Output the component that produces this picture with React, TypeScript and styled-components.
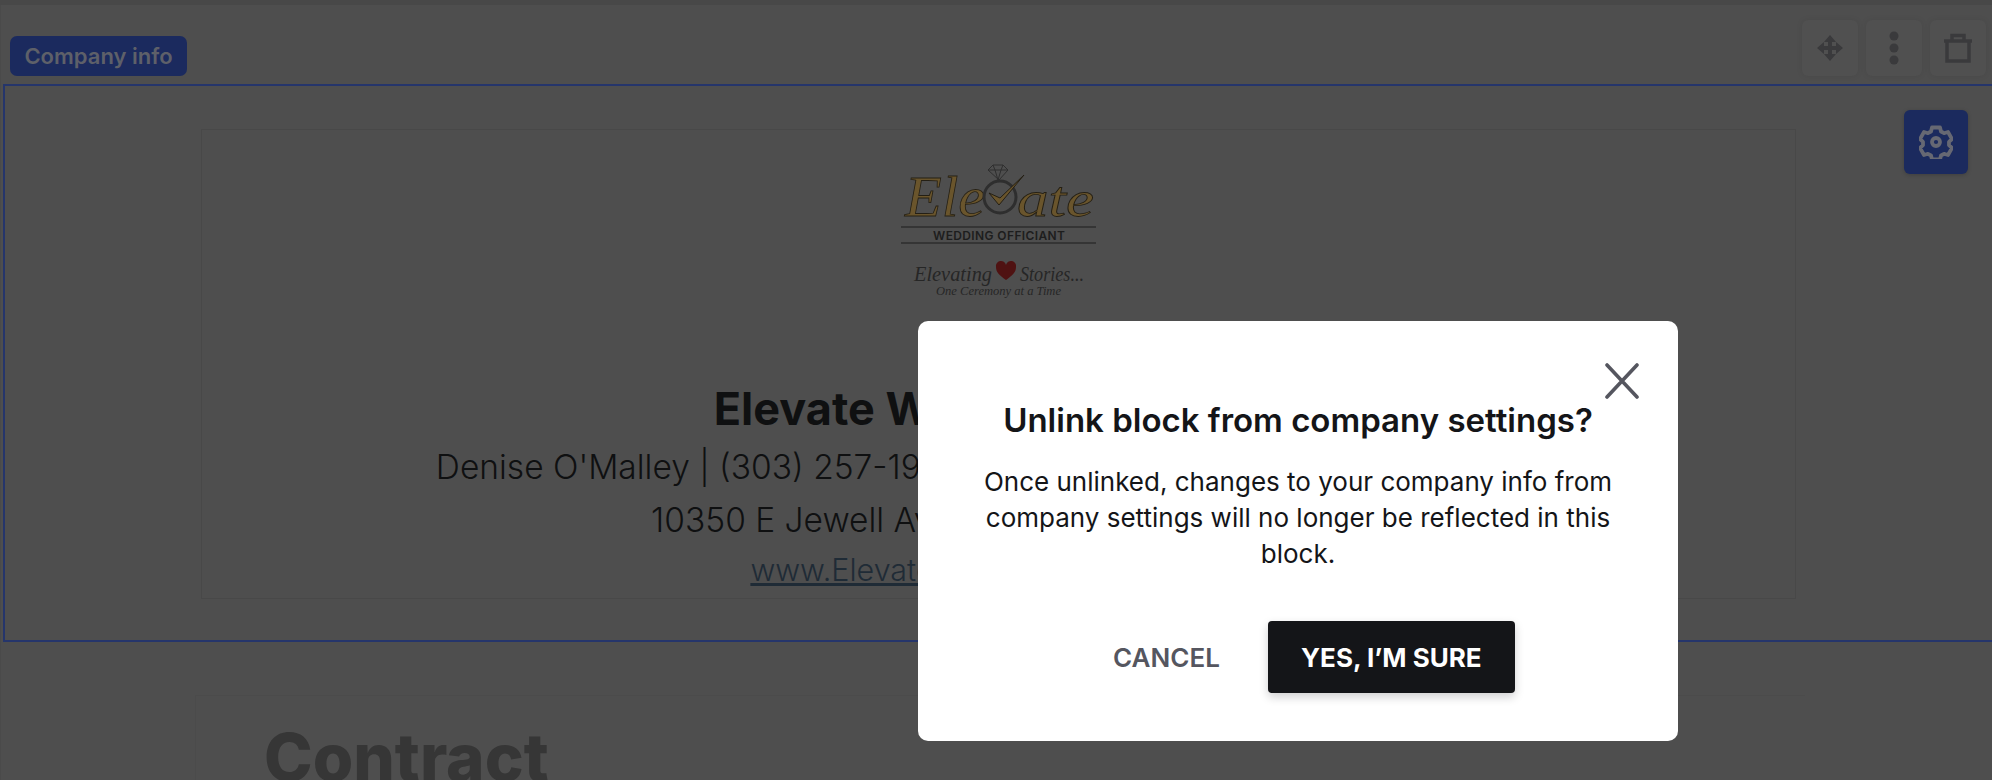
import styled, { createGlobalStyle } from "styled-components";

const GlobalStyle = createGlobalStyle`
  html, body {
    margin: 0;
    padding: 0;
    background: #4e4e4e;
    font-family: "Inter", "Liberation Sans", sans-serif;
  }
  * { box-sizing: border-box; }
`;
const Page = styled.div`
  position: relative;
  width: 1992px;
  height: 780px;
  overflow: hidden;
  background: #4e4e4e;
`;
const TopStrip = styled.div`
  height: 5px;
  background: #484848;
`;
const Sheet = styled.div`
  padding-left: 2px;
  border-left: 1px solid #4a4a4a;
`;
const BlockBar = styled.div`
  height: 79px;
  display: flex;
  justify-content: space-between;
  padding: 15px 6px 8px 7px;
`;
const BlockLabel = styled.span`
  align-self: flex-end;
  height: 40px;
  width: 177px;
  display: flex;
  align-items: center;
  justify-content: center;
  border-radius: 7px;
  background: #1b2a5e;
  color: #5e6069;
  font-size: 22px;
  font-weight: 600;
  white-space: nowrap;
`;
const Tools = styled.div`
  display: flex;
  gap: 8px;
`;
const ToolButton = styled.div`
  width: 56px;
  height: 56px;
  display: flex;
  align-items: center;
  justify-content: center;
  border-radius: 6px;
  background: #505050;
  box-shadow: 0 0 6px rgba(0, 0, 0, 0.08);
  color: #3a3a3c;
`;
const Block = styled.section`
  position: relative;
  height: 558px;
  padding: 43px 0 0 196px;
  border: 1px solid #25356b;
  border-width: 2px 0 2px 2px;
`;
const GearButton = styled.div`
  position: absolute;
  top: 24px;
  right: 24px;
  width: 64px;
  height: 64px;
  display: flex;
  align-items: center;
  justify-content: center;
  border-radius: 6px;
  background: #1b2a5e;
  color: #666873;
  box-shadow: 0 1px 4px rgba(0, 0, 0, 0.2);
`;
const CompanyCard = styled.div`
  width: 1595px;
  height: 470px;
  border: 1px solid #484848;
  display: flex;
  flex-direction: column;
  align-items: center;
  color: #0f1011;
`;
const LogoWrap = styled.div`
  height: 247px;
  padding: 21px 0 0 2px;
`;
const CompanyName = styled.h2`
  margin: 0;
  font-size: 45px;
  line-height: 64px;
  font-weight: 700;
  white-space: nowrap;
`;
const CompanyLine = styled.p`
  margin: 0;
  font-size: 33.5px;
  line-height: 53px;
  font-weight: 300;
  white-space: nowrap;
`;
const CompanyLink = styled.a`
  font-size: 30.5px;
  line-height: 46px;
  font-weight: 300;
  color: #1f2b36;
  text-decoration: underline;
  white-space: nowrap;
`;
const ContractCard = styled.div`
  margin: 53px 0 0 192px;
  width: 1610px;
  padding: 22px 0 0 68px;
  border-left: 1px solid #4b4b4b;
  border-top: 1px solid #4b4b4b;
`;
const ContractTitle = styled.h1`
  margin: 0;
  font-size: 65.5px;
  line-height: 80px;
  font-weight: 800;
  color: #363636;
`;
const Dialog = styled.div`
  position: absolute;
  left: 918px;
  top: 321px;
  width: 760px;
  height: 420px;
  padding: 77px 50px 0;
  display: flex;
  flex-direction: column;
  align-items: center;
  border-radius: 10px;
  background: #fff;
  color: #141518;
`;
const CloseButton = styled.div`
  position: absolute;
  top: 42px;
  right: 38px;
  width: 36px;
  height: 36px;
  color: #55565f;
`;
const DialogTitle = styled.h3`
  margin: 0;
  font-size: 33px;
  line-height: 44px;
  font-weight: 600;
  white-space: nowrap;
`;
const DialogBody = styled.p`
  margin: 22px 0 0;
  width: 650px;
  text-align: center;
  font-size: 26px;
  line-height: 36px;
  font-weight: 400;
`;
const DialogActions = styled.div`
  margin-top: 49px;
  padding-left: 32px;
  display: flex;
  align-items: center;
  gap: 48px;
`;
const CancelButton = styled.span`
  font-size: 26px;
  font-weight: 600;
  color: #55565f;
`;
const ConfirmButton = styled.span`
  width: 247px;
  height: 72px;
  display: flex;
  align-items: center;
  justify-content: center;
  border-radius: 4px;
  background: #141518;
  color: #fff;
  font-size: 26px;
  font-weight: 700;
  box-shadow: 0 4px 10px rgba(20, 21, 24, 0.2);
`;

function MoveIcon() {
  return (
    <svg width="28" height="28" viewBox="0 0 28 28" fill="currentColor">
      <path d="M14 1l6 7h-4v4h4V8l7 6-7 6v-4h-4v4h4l-6 7-6-7h4v-4H8v4l-7-6 7-6v4h4V8H8z" />
    </svg>
  );
}

function DotsIcon() {
  return (
    <svg width="12" height="36" viewBox="0 0 12 36" fill="currentColor">
      <circle cx="6" cy="6" r="4.500" />
      <circle cx="6" cy="18" r="4.500" />
      <circle cx="6" cy="30" r="4.500" />
    </svg>
  );
}

function TrashIcon() {
  return (
    <svg width="30" height="30" viewBox="0 0 30 30" fill="none" stroke="currentColor" strokeWidth="3.500">
      <path d="M1 8h28M4 8v20h22V8M9 8V2.500h12V8" />
    </svg>
  );
}

function GearIcon() {
  return (
    <svg width="34" height="34" viewBox="0 0 34 34" fill="none" stroke="currentColor" strokeWidth="3.800" strokeLinejoin="round">
      <path d="M13 2.500h8l1 4 3 1.700 4-1.200 4 7-3 2.800v3.400l3 2.800-4 7-4-1.200-3 1.700-1 4h-8l-1-4-3-1.700-4 1.200-4-7 3-2.800v-3.400l-3-2.800 4-7 4 1.200 3-1.700z" />
      <circle cx="17" cy="17" r="4" />
    </svg>
  );
}

function ElevateLogo() {
  return (
    <svg width="240" height="160" viewBox="0 0 240 160">
      <g fontFamily="'Liberation Serif', serif" fontStyle="italic">
        <text x="25" y="65" fontSize="58" textLength="80" lengthAdjust="spacingAndGlyphs" fill="#6a552c" stroke="#241f14" strokeWidth="0.8">
          Ele
        </text>
        <text x="137" y="65" fontSize="50" textLength="77" lengthAdjust="spacingAndGlyphs" fill="#6a552c" stroke="#241f14" strokeWidth="0.8">
          ate
        </text>
        <text x="34" y="130" fontSize="22" textLength="78" lengthAdjust="spacingAndGlyphs" fill="#262626">
          Elevating
        </text>
        <text x="140" y="130" fontSize="22" textLength="64" lengthAdjust="spacingAndGlyphs" fill="#262626">
          Stories...
        </text>
        <text x="56" y="144" fontSize="13" textLength="125" lengthAdjust="spacingAndGlyphs" fill="#262626">
          One Ceremony at a Time
        </text>
      </g>
      <circle cx="120" cy="46" r="16" fill="none" stroke="#2e2e2e" strokeWidth="3" />
      <path d="M109 42l10 12 25-30-24 23z" fill="#6a552c" stroke="#241f14" strokeWidth="1" />
      <path d="M108 19l5-5h10l5 5-9 10zM108 19h20M113 14l2 5 3 10M123 14l-2 5-3 10" fill="none" stroke="#2e2e2e" strokeWidth="1" />
      <path d="M21 76h195M21 92h195" stroke="#1d1d1d" strokeWidth="1" />
      <text x="119" y="88.500" fontFamily="Inter, sans-serif" fontSize="12" fontWeight="600" textAnchor="middle" textLength="132" fill="#1d1d1d">
        WEDDING OFFICIANT
      </text>
      <path d="M126 129c-7-5-10-8-10-13a5 5 0 0 1 10-2 5 5 0 0 1 10 2c0 5-3 8-10 13z" fill="#4f1212" />
    </svg>
  );
}

export default function App() {
  return (
    <Page>
      <GlobalStyle />
      <TopStrip />
      <Sheet>
        <BlockBar>
          <BlockLabel>Company info</BlockLabel>
          <Tools>
            <ToolButton>
              <MoveIcon />
            </ToolButton>
            <ToolButton>
              <DotsIcon />
            </ToolButton>
            <ToolButton>
              <TrashIcon />
            </ToolButton>
          </Tools>
        </BlockBar>
        <Block>
          <GearButton>
            <GearIcon />
          </GearButton>
          <CompanyCard>
            <LogoWrap>
              <ElevateLogo />
            </LogoWrap>
            <CompanyName>Elevate Wedding Officiant</CompanyName>
            <CompanyLine>Denise O'Malley | (303) 257-1916 | Denise@ElevateWeddingOfficiant.net</CompanyLine>
            <CompanyLine>10350 E Jewell Ave, Aurora, Colorado 80247</CompanyLine>
            <CompanyLink>www.ElevateWeddingOfficiant.com</CompanyLink>
          </CompanyCard>
        </Block>
        <ContractCard>
          <ContractTitle>Contract</ContractTitle>
        </ContractCard>
      </Sheet>
      <Dialog>
        <CloseButton>
          <svg width="36" height="36" viewBox="0 0 36 36" fill="none" stroke="currentColor" strokeWidth="3.600" strokeLinecap="round">
            <path d="M3 2l30 32M33 2L3 34" />
          </svg>
        </CloseButton>
        <DialogTitle>Unlink block from company settings?</DialogTitle>
        <DialogBody>
          Once unlinked, changes to your company info from company settings will no longer be reflected in this block.
        </DialogBody>
        <DialogActions>
          <CancelButton>CANCEL</CancelButton>
          <ConfirmButton>YES, I’M SURE</ConfirmButton>
        </DialogActions>
      </Dialog>
    </Page>
  );
}
